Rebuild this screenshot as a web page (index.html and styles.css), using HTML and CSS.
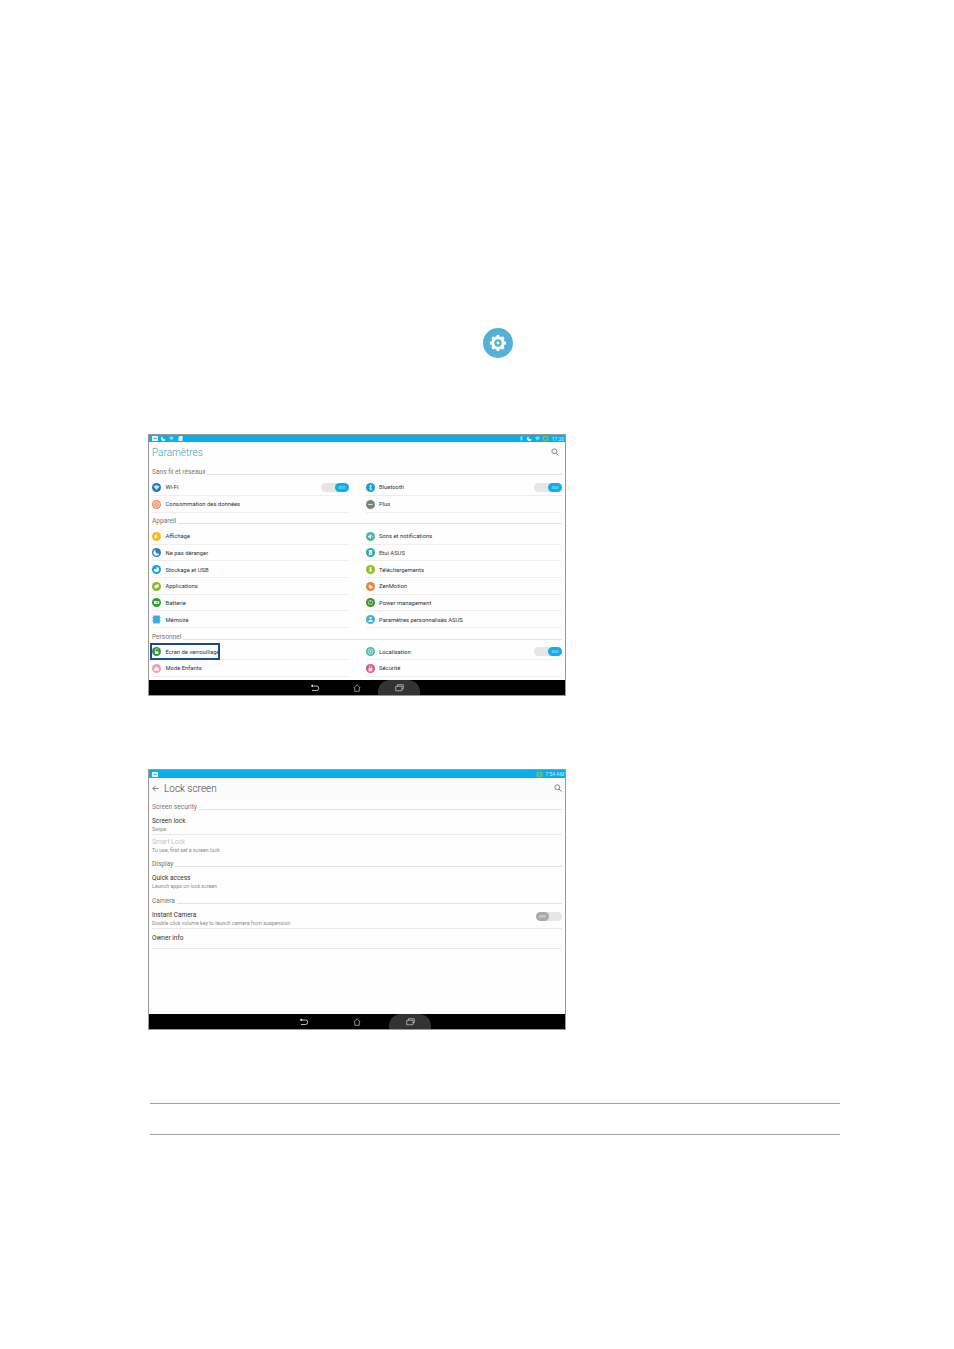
FILE: index.html

```html
<!DOCTYPE html>
<html>
<head>
    <title>Lock screen settings</title>
    <link rel="stylesheet" href="styles.css">
</head>
<body>
    <svg class="sprites" width="0" height="0">
        <symbol id="i-search" viewBox="0 0 16 16"><circle cx="6.5" cy="6.5" r="4.8" fill="none" stroke="#666" stroke-width="1.5"/><path d="M10 10l5 5" stroke="#666" stroke-width="1.7"/></symbol>
        <symbol id="i-arrow" viewBox="0 0 16 16"><path d="M15 8H2M8 2L2 8l6 6" fill="none" stroke="#555" stroke-width="1.600"/></symbol>
        <symbol id="i-back" viewBox="0 0 20 16"><path d="M5 2H3.500v3H5zM4 4h9a4.500 4.500 0 0 1 0 9H4" fill="none" stroke="#fff" stroke-width="1.500"/></symbol>
        <symbol id="i-home" viewBox="0 0 16 16"><path d="M1.500 8L8 1.500 14.500 8M3.500 7v7.500h9V7" fill="none" stroke="#ddd" stroke-width="1.300"/></symbol>
        <symbol id="i-recent" viewBox="0 0 18 16"><path d="M5 4V1.500h11.500v8H14M1.500 4.500H14v9H1.500z" fill="none" stroke="#ddd" stroke-width="1.300"/></symbol>
        <symbol id="i-battery" viewBox="0 0 12 10"><rect x="0.500" y="0.500" width="11" height="9" fill="#8dc63f"/><rect x="3.500" y="2.500" width="5" height="5" fill="#0aaee8"/></symbol>
        <symbol id="i-notif" viewBox="0 0 10 8"><rect width="10" height="8" rx="1" fill="#e8f7fd"/><rect x="2" y="3" width="6" height="1.500" fill="#0aaee8"/></symbol>
        <symbol id="i-moon" viewBox="0 0 10 10"><path d="M3 0.500a5 5 0 1 0 6.500 6.500A5.500 5.500 0 0 1 3 0.500z" fill="#e8f7fd"/></symbol>
        <symbol id="i-wifi" viewBox="0 0 10 8"><path d="M0 2.500a7 7 0 0 1 10 0L5 8z" fill="#8fd5f2"/></symbol>
        <symbol id="i-sd" viewBox="0 0 8 10"><path d="M2 0h6v10H0V2z" fill="#e8f7fd"/></symbol>
        <symbol id="i-bt" viewBox="0 0 8 12"><path d="M1 3l5 5.500L4 11V1l2 2.500L1 9" fill="none" stroke="#e8f7fd" stroke-width="1.200"/></symbol>
    </svg>

    <div class="launcher">
        <svg class="gear" viewBox="0 0 30 30">
            <circle cx="15" cy="15" r="15" fill="#55b0d5"/>
            <circle cx="15" cy="15" r="5.200" fill="none" stroke="#fff" stroke-width="3"/>
            <path d="M15 7v3M15 20v3M7 15h3M20 15h3M9.300 9.300l2.200 2.200M18.500 18.500l2.200 2.200M20.700 9.300l-2.200 2.200M11.500 18.500l-2.200 2.200" stroke="#fff" stroke-width="2.800"/>
            <circle cx="15" cy="15" r="1.400" fill="#fff"/>
        </svg>
    </div>

    <div class="screen screen-settings">
        <div class="statusbar">
            <div class="status-icons">
                <svg class="st st-notif"><use href="#i-notif"/></svg>
                <svg class="st st-moon"><use href="#i-moon"/></svg>
                <svg class="st st-wifi"><use href="#i-wifi"/></svg>
                <svg class="st st-sd"><use href="#i-sd"/></svg>
            </div>
            <div class="status-icons">
                <svg class="st st-bt"><use href="#i-bt"/></svg>
                <svg class="st st-moon"><use href="#i-moon"/></svg>
                <svg class="st st-wifi"><use href="#i-wifi"/></svg>
                <svg class="st st-battery"><use href="#i-battery"/></svg>
                <span class="clock">17:26</span>
            </div>
        </div>
        <div class="appbar">
            <span class="title title-teal">Paramètres</span>
            <svg class="search"><use href="#i-search"/></svg>
        </div>

        <div class="section-head"><span>Sans fil et réseaux</span><i></i></div>
        <div class="grid">
            <div class="row">
                <svg class="ico" viewBox="0 0 16 16"><circle cx="8" cy="8" r="8" fill="#1f78b4"/><path d="M2.500 6.500a8 8 0 0 1 11 0L8 12.500z" fill="#bfe3f5"/></svg>
                <span>Wi-Fi</span>
                <div class="toggle on"><b>OUI</b></div>
            </div>
            <div class="row">
                <svg class="ico" viewBox="0 0 16 16"><circle cx="8" cy="8" r="8" fill="#0f9fdd"/><path d="M5.500 5.500l5 5L8 13V3l2.500 2.500-5 5" fill="none" stroke="#e4f4fb" stroke-width="1.200"/></svg>
                <span>Bluetooth</span>
                <div class="toggle on"><b>OUI</b></div>
            </div>
            <div class="row">
                <svg class="ico" viewBox="0 0 16 16"><circle cx="8" cy="8" r="8" fill="#f08a5d"/><circle cx="8" cy="8" r="5" fill="none" stroke="#fff" stroke-width="1.300"/><circle cx="8" cy="8" r="2.200" fill="#f9c9b4"/></svg>
                <span>Consommation des données</span>
            </div>
            <div class="row">
                <svg class="ico" viewBox="0 0 16 16"><circle cx="8" cy="8" r="8" fill="#7a857a"/><path d="M4 7h8v2H4z" fill="#d8dcd8"/></svg>
                <span>Plus</span>
            </div>
        </div>

        <div class="section-head"><span>Appareil</span><i></i></div>
        <div class="grid">
            <div class="row">
                <svg class="ico" viewBox="0 0 16 16"><circle cx="8" cy="8" r="8" fill="#f5b81e"/><circle cx="8" cy="8" r="3.500" fill="#fff"/><path d="M8 4.500a3.500 3.500 0 0 1 0 7z" fill="#f5b81e"/></svg>
                <span>Affichage</span>
            </div>
            <div class="row">
                <svg class="ico" viewBox="0 0 16 16"><circle cx="8" cy="8" r="8" fill="#45b8a8"/><path d="M3.500 6.500h2.500l3-2.500v8l-3-2.500H3.500z" fill="#fff"/><path d="M10.500 6a3 3 0 0 1 0 4" stroke="#fff" fill="none"/></svg>
                <span>Sons et notifications</span>
            </div>
            <div class="row">
                <svg class="ico" viewBox="0 0 16 16"><circle cx="8" cy="8" r="8" fill="#2f7fb8"/><path d="M6 3a5.500 5.500 0 1 0 7 7A6 6 0 0 1 6 3z" fill="#e4f2fa"/></svg>
                <span>Ne pas déranger</span>
            </div>
            <div class="row">
                <svg class="ico" viewBox="0 0 16 16"><circle cx="8" cy="8" r="8" fill="#20b0a8"/><path d="M5 3.500h6v9H5z" fill="#fff"/><path d="M6.500 9.500h3v1.500h-3z" fill="#20b0a8"/></svg>
                <span>Étui ASUS</span>
            </div>
            <div class="row">
                <svg class="ico" viewBox="0 0 16 16"><circle cx="8" cy="8" r="8" fill="#1f9fd8"/><path d="M8 3.500a4.500 4.500 0 1 1-4.200 3L8 8z" fill="#e4f4fb"/></svg>
                <span>Stockage et USB</span>
            </div>
            <div class="row">
                <svg class="ico" viewBox="0 0 16 16"><circle cx="8" cy="8" r="8" fill="#8dc21f"/><path d="M6.500 3.500h3v5l2 1-3.500 3-3.500-3 2-1z" fill="#fff"/></svg>
                <span>Téléchargements</span>
            </div>
            <div class="row">
                <svg class="ico" viewBox="0 0 16 16"><circle cx="8" cy="8" r="8" fill="#8db52c"/><path d="M4 6.500l7-3 1.500 5-7 3.500z" fill="#eef5d8"/></svg>
                <span>Applications</span>
            </div>
            <div class="row">
                <svg class="ico" viewBox="0 0 16 16"><circle cx="8" cy="8" r="8" fill="#e8853a"/><path d="M6 4.500l3 2 2.500 1-.5 4H6.500L4.500 8.500z" fill="#fff"/></svg>
                <span>ZenMotion</span>
            </div>
            <div class="row">
                <svg class="ico" viewBox="0 0 16 16"><circle cx="8" cy="8" r="8" fill="#2aa52a"/><path d="M3.500 5.500h8.500v1h1v3h-1v1H3.500z" fill="#fff"/><path d="M8 6.500h2.500v3H8z" fill="#2aa52a"/></svg>
                <span>Batterie</span>
            </div>
            <div class="row">
                <svg class="ico" viewBox="0 0 16 16"><circle cx="8" cy="8" r="8" fill="#3f8f2a"/><circle cx="8" cy="8" r="3.800" fill="none" stroke="#dff0d8" stroke-width="1.300"/><path d="M8 3v4" stroke="#3f8f2a" stroke-width="2.500"/><path d="M8 3.500v4" stroke="#dff0d8" stroke-width="1.200"/></svg>
                <span>Power management</span>
            </div>
            <div class="row">
                <svg class="ico" viewBox="0 0 16 16"><path d="M2 1h12v14H2z" fill="#3fa9e0"/><path d="M0 4h2v2H0zM0 9h2v2H0zM14 4h2v2h-2zM14 9h2v2h-2z" fill="#8ccdee"/></svg>
                <span>Mémoire</span>
            </div>
            <div class="row">
                <svg class="ico" viewBox="0 0 16 16"><circle cx="8" cy="8" r="8" fill="#3fb0e0"/><circle cx="8" cy="5.500" r="2" fill="#fff"/><path d="M4 12c0-5 8-5 8 0z" fill="#fff"/></svg>
                <span>Paramètres personnalisés ASUS</span>
            </div>
        </div>

        <div class="section-head"><span>Personnel</span><i></i></div>
        <div class="grid">
            <div class="row">
                <svg class="ico" viewBox="0 0 16 16"><circle cx="8" cy="8" r="8" fill="#3a8f3a"/><path d="M5 7.500h6.500v5H5z" fill="#e4f2e4"/><path d="M6 7.500V5a2.200 2.200 0 0 1 4.400 0" fill="none" stroke="#e4f2e4" stroke-width="1.200"/></svg>
                <span>Écran de verrouillage</span>
                <div class="highlight"></div>
            </div>
            <div class="row">
                <svg class="ico" viewBox="0 0 16 16"><circle cx="8" cy="8" r="8" fill="#45b8a8"/><circle cx="8" cy="8" r="4.500" fill="none" stroke="#e4f6f3" stroke-width="1.300"/><circle cx="8" cy="8" r="1.700" fill="#e4f6f3"/></svg>
                <span>Localisation</span>
                <div class="toggle on"><b>OUI</b></div>
            </div>
            <div class="row">
                <svg class="ico" viewBox="0 0 16 16"><circle cx="8" cy="8" r="8" fill="#f29ab0"/><path d="M3.500 8L8 4l4.500 4v4.500h-9z" fill="#fde9ee"/></svg>
                <span>Mode Enfants</span>
            </div>
            <div class="row">
                <svg class="ico" viewBox="0 0 16 16"><circle cx="8" cy="8" r="8" fill="#e0557f"/><path d="M4.500 6.500h7v6.500h-7z" fill="#fbe3ea"/><path d="M6 6.500V5a2 2 0 0 1 4 0v1.500" fill="none" stroke="#fbe3ea"/></svg>
                <span>Sécurité</span>
            </div>
        </div>

        <div class="navbar nav-tight">
            <svg class="nav-back"><use href="#i-back"/></svg>
            <svg class="nav-home"><use href="#i-home"/></svg>
            <div class="nav-pill"><svg class="nav-recent"><use href="#i-recent"/></svg></div>
        </div>
    </div>

    <div class="screen screen-lock">
        <div class="statusbar">
            <div class="status-icons">
                <svg class="st st-notif"><use href="#i-notif"/></svg>
            </div>
            <div class="status-icons">
                <svg class="st st-battery"><use href="#i-battery"/></svg>
                <span class="clock">7:54 AM</span>
            </div>
        </div>
        <div class="appbar appbar-lock">
            <span class="title"><svg class="arrow"><use href="#i-arrow"/></svg>Lock screen</span>
            <svg class="search"><use href="#i-search"/></svg>
        </div>

        <div class="section-head"><span>Screen security</span><i></i></div>
        <div class="pref">
            <p class="pref-name">Screen lock</p>
            <p class="pref-sub">Swipe</p>
        </div>
        <div class="pref pref-off">
            <p class="pref-name">Smart Lock</p>
            <p class="pref-sub">To use, first set a screen lock</p>
        </div>

        <div class="section-head"><span>Display</span><i></i></div>
        <div class="pref pref-plain">
            <p class="pref-name">Quick access</p>
            <p class="pref-sub">Launch apps on lock screen</p>
        </div>

        <div class="section-head"><span>Camera</span><i></i></div>
        <div class="pref">
            <p class="pref-name">Instant Camera</p>
            <p class="pref-sub">Double click volume key to launch camera from suspension</p>
            <div class="toggle off"><b>OFF</b></div>
        </div>
        <div class="pref pref-single">
            <p class="pref-name">Owner info</p>
        </div>

        <div class="navbar nav-wide">
            <svg class="nav-back"><use href="#i-back"/></svg>
            <svg class="nav-home"><use href="#i-home"/></svg>
            <div class="nav-pill"><svg class="nav-recent"><use href="#i-recent"/></svg></div>
        </div>
    </div>

    <div class="note-rules"></div>
</body>
</html>
```

FILE: styles.css

```css
* {
    margin: 0;
    padding: 0;
    box-sizing: border-box;
}
body {
    font-family: 'Roboto', 'Liberation Sans', sans-serif;
    background: white;
    color: #333;
    height: 1349px;
    overflow: hidden;
}
.sprites {
    position: absolute;
}
.launcher {
    padding: 328px 0 0 483px;
    height: 358px;
}
.gear {
    display: block;
    width: 30px;
    height: 30px;
}

/* device screenshots */
.screen {
    display: flex;
    flex-direction: column;
    width: 418px;
    margin-left: 148px;
    border: 1px solid #999;
    background: #fefefe;
}
.screen-settings {
    height: 262px;
    margin-top: 76px;
}
.screen-lock {
    height: 261px;
    margin-top: 73px;
}
.statusbar {
    display: flex;
    justify-content: space-between;
    align-items: center;
    height: 8px;
    padding: 0 1px 0 3px;
    background: #0aaee8;
    flex-shrink: 0;
}
.screen-settings .statusbar {
    height: 7.400px;
}
.status-icons {
    display: flex;
    align-items: center;
    gap: 3px;
}
.st {
    display: block;
    height: 5px;
    width: 5px;
}
.st-notif {
    width: 6px;
}
.st-sd {
    margin-left: 1px;
}
.st-battery {
    width: 7px;
    margin-left: -1px;
}
.clock {
    font-size: 5px;
    line-height: 8px;
    color: #cdeefb;
}
.screen-lock .clock {
    margin-left: -1px;
}
.appbar {
    display: flex;
    justify-content: space-between;
    align-items: center;
    height: 21.500px;
    padding: 0 6px 1.500px 3px;
    flex-shrink: 0;
}
.appbar-lock {
    height: 20.600px;
    background: #fbfbfb;
    padding: 0 3px;
}
.title {
    display: flex;
    align-items: center;
    font-size: 10px;
    font-weight: 300;
    color: #444;
}
.title-teal {
    color: #3f9fb8;
}
.arrow {
    width: 7px;
    height: 7px;
    margin-right: 5px;
}
.search {
    width: 8px;
    height: 8px;
}
.section-head {
    display: flex;
    align-items: flex-end;
    height: 15.400px;
    margin: 0 3px;
    padding-bottom: 4px;
    font-size: 6.600px;
    line-height: 6px;
    color: #777;
    flex-shrink: 0;
}
.section-head i {
    flex: 1;
    height: 1px;
    margin-left: 2px;
    background: #e2e2e2;
}
.screen-lock .section-head {
    height: 15px;
    padding-bottom: 3.200px;
}

/* settings list */
.grid {
    display: grid;
    grid-template-columns: 1fr 1fr;
    column-gap: 17px;
    margin: 0 3px;
}
.row {
    position: relative;
    display: flex;
    align-items: center;
    gap: 4.500px;
    height: 16.700px;
    padding-top: 0.600px;
    font-size: 5.850px;
    border-bottom: 1px solid #eee;
}
.ico {
    width: 9px;
    height: 9px;
    flex-shrink: 0;
}
.highlight {
    position: absolute;
    left: -2px;
    top: -1px;
    width: 70px;
    height: 17px;
    border: 2px solid #1a4a8f;
}
.toggle {
    position: absolute;
    right: 0;
    top: 3.500px;
    width: 28px;
    height: 9px;
    border-radius: 5px;
    background: #e6e6e6;
    display: flex;
}
.toggle b {
    width: 14px;
    height: 9px;
    border-radius: 5px;
    font-size: 4px;
    font-weight: 400;
    line-height: 9px;
    text-align: center;
    color: #cfeefb;
}
.toggle.on {
    justify-content: flex-end;
}
.toggle.on b {
    background: #10aee8;
}
.toggle.off {
    top: 5px;
    width: 26px;
}
.toggle.off b {
    width: 13px;
    background: #aaa;
    color: #e6e6e6;
}

/* lock screen list */
.pref {
    position: relative;
    height: 21.800px;
    margin: 0 3px;
    padding-top: 3.700px;
    border-bottom: 1px solid #e8e8e8;
    flex-shrink: 0;
}
.pref-name {
    font-size: 6.500px;
    line-height: 8px;
}
.pref-sub {
    font-size: 5.250px;
    line-height: 8px;
    color: #888;
}
.pref-off {
    height: 20px;
    padding-top: 2.500px;
    border-bottom: none;
}
.pref-off .pref-name {
    color: #c4c4c4;
}
.pref-plain {
    border-bottom: none;
}
.pref-single {
    height: 20px;
    padding-top: 5px;
}

/* nav bar */
.navbar {
    display: grid;
    grid-template-columns: 1fr 8px 1fr;
    align-items: center;
    height: 14.600px;
    margin-top: auto;
    background: black;
    flex-shrink: 0;
}
.nav-home {
    width: 8px;
    height: 8px;
}
.nav-back {
    width: 10px;
    height: 8px;
    justify-self: end;
}
.nav-recent {
    width: 9px;
    height: 8px;
}
.nav-pill {
    display: flex;
    align-items: center;
    justify-content: center;
    width: 42px;
    height: 14.600px;
    border-radius: 12px 12px 0 0;
    background: #333;
}
.nav-tight .nav-back {
    margin-right: 33px;
}
.nav-tight .nav-pill {
    margin-left: 17px;
}
.nav-wide .nav-back {
    margin-right: 44px;
}
.nav-wide .nav-pill {
    margin-left: 28px;
}

/* empty table lines under the screenshots */
.note-rules {
    width: 690px;
    height: 32px;
    margin: 73px 0 0 150px;
    border-top: 1px solid #a0a0a0;
    border-bottom: 1px solid #a0a0a0;
}
```
